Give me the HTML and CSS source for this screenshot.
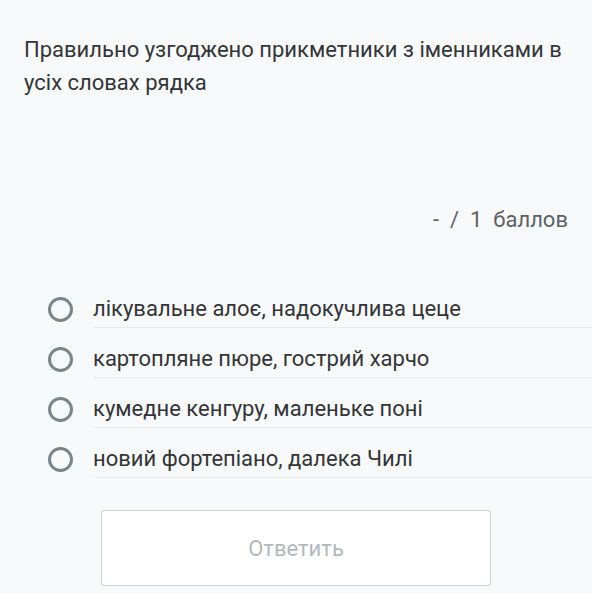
FILE: index.html
```html
<!DOCTYPE html>
<html lang="uk">
<head>
<meta charset="utf-8">
<link rel="stylesheet" href="styles.css">
</head>
<body>
<div class="page">
  <h1 class="question">Правильно узгоджено прикметники з іменниками в усіх словах рядка</h1>
  <div class="score">-&nbsp; /&nbsp; 1&nbsp; баллов</div>
  <ul class="options">
    <li class="option"><span class="radio"></span><span class="label">лікувальне алоє, надокучлива цеце</span></li>
    <li class="option"><span class="radio"></span><span class="label">картопляне пюре, гострий харчо</span></li>
    <li class="option"><span class="radio"></span><span class="label">кумедне кенгуру, маленьке поні</span></li>
    <li class="option"><span class="radio"></span><span class="label">новий фортепіано, далека Чилі</span></li>
  </ul>
  <button class="submit" type="button">Ответить</button>
</div>
</body>
</html>
```

FILE: styles.css
```css
html, body {
  margin: 0;
  padding: 0;
  background: #f8f9fb;
}
body {
  font-family: Roboto, "Noto Sans", sans-serif;
  color: #333538;
}
.page {
  padding-top: 33px;
  display: flex;
  flex-direction: column;
}
.question {
  margin: 0;
  padding: 0 24px;
  font-size: 22px;
  font-weight: 400;
  line-height: 33px;
  color: #333538;
}
.score {
  margin-top: 105px;
  padding-right: 24px;
  text-align: right;
  font-size: 22px;
  line-height: 32px;
  color: #5c6166;
}
.options {
  list-style: none;
  margin: 57px 0 0 48px;
  padding: 0;
}
.option {
  display: flex;
  align-items: flex-start;
  gap: 20px;
  margin-bottom: 15px;
}
.option:last-child {
  margin-bottom: 0;
}
.radio {
  flex: none;
  width: 25px;
  height: 25px;
  margin-top: 3.5px;
  box-sizing: border-box;
  border: 3px solid #7b848b;
  border-radius: 50%;
}
.label {
  flex: 1;
  font-size: 22px;
  line-height: 32px;
  padding-bottom: 2px;
  border-bottom: 1px solid #e9ecef;
}
.submit {
  align-self: center;
  margin-top: 32px;
  width: 390px;
  height: 76px;
  background: #fff;
  border: 1.5px solid #cfd2d5;
  border-radius: 2px;
  font-family: Roboto, "Noto Sans", sans-serif;
  font-size: 22px;
  color: #b3b8bc;
}
```
